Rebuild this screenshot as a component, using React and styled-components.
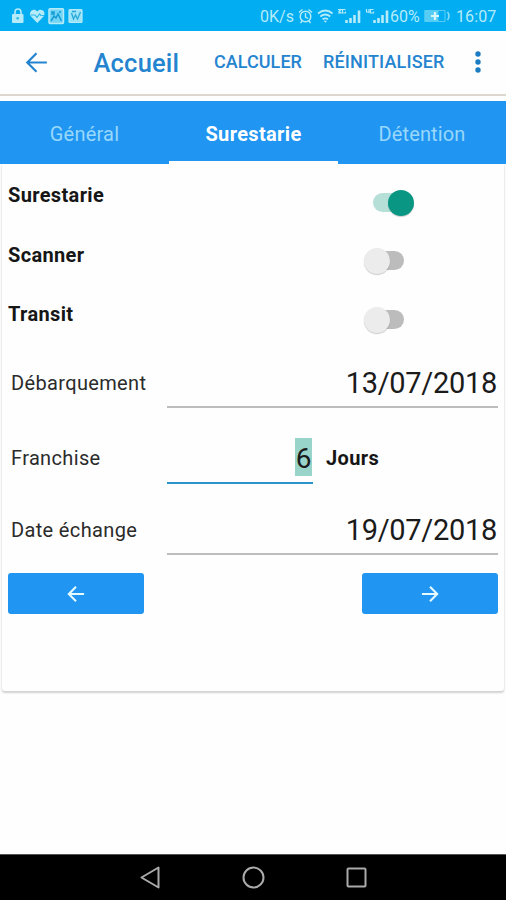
import React from "react";
import styled, { createGlobalStyle } from "styled-components";

const Global = createGlobalStyle`
  * { box-sizing: border-box; }
  body { margin: 0; background: #fefefe; font-family: Roboto, "Liberation Sans", sans-serif; }
  svg { display: block; flex: none; }
`;

const Screen = styled.div`
  width: 506px;
  height: 900px;
  display: flex;
  flex-direction: column;
  overflow: hidden;
  background: #fefefe;
`;

const StatusBar = styled.div`
  height: 31px;
  flex: none;
  display: flex;
  justify-content: space-between;
  background: #03adf1;
`;

const StatusIcons = styled.svg`
  fill: none;
  stroke: #b5ebf9;
`;

const StatusRight = styled.div`
  display: flex;
  align-items: center;
  padding: 2px 10px 0 0;
  color: #b5ebf9;
`;

const StatusText = styled.span`
  width: ${(p) => p.$w}px;
  font-size: ${(p) => p.$size}px;
  letter-spacing: ${(p) => p.$ls || 0}px;
  line-height: 29px;
  white-space: nowrap;
`;

const AppBar = styled.header`
  height: 65px;
  flex: none;
  display: flex;
  align-items: center;
  padding: 0 22px 1px 25px;
  color: #2484cf;
  border-bottom: 2px solid #dcd8d0;
  background: #fefefe;
`;

const Title = styled.h1`
  width: 120.5px;
  margin: 2px 0 0 45.5px;
  font-size: 25.5px;
  font-weight: 500;
  letter-spacing: 0.2px;
  line-height: 32px;
`;

const Action = styled.button`
  width: ${(p) => p.$w}px;
  padding: 0;
  border: 0;
  background: none;
  color: inherit;
  text-align: left;
  font: 500 18px/24px Roboto, "Liberation Sans", sans-serif;
  letter-spacing: ${(p) => p.$ls}px;
`;

const Tabs = styled.nav`
  height: 63px;
  flex: none;
  margin-top: 5px;
  display: grid;
  grid-template-columns: 169px 169px 168px;
  background: #2095f2;
`;

const Tab = styled.button`
  padding: 5px 0 0;
  border: 0;
  border-bottom: 3px solid ${(p) => (p.$active ? "#fefefe" : "transparent")};
  background: none;
  color: ${(p) => (p.$active ? "#fff" : "#98d8fb")};
  font-family: inherit;
  font-size: 20px;
  font-weight: ${(p) => (p.$active ? 700 : 400)};
  letter-spacing: ${(p) => p.$ls}px;
`;

const Card = styled.main`
  height: 527px;
  flex: none;
  margin: 0 2px;
  padding: 0 6px;
  border-radius: 0 0 3px 3px;
  background: #fefefe;
  box-shadow: 0 2px 2px #d2d2d2, 0 0 3px #e8e8e8;
  clip-path: inset(0 -4px -6px -4px);
`;

const SwitchRow = styled.div`
  height: ${(p) => p.$h}px;
  display: flex;
  justify-content: space-between;
  align-items: center;
  padding-right: 90px;
`;

const Strong = styled.span`
  font-size: 20px;
  font-weight: 700;
  line-height: 24px;
  letter-spacing: 0.35px;
  color: #161616;
`;

const Toggle = styled.span`
  width: 45px;
  height: 28px;
  display: flex;
  align-items: center;
  margin-top: ${(p) => p.$drop}px;
  padding-left: ${(p) => (p.$on ? 10 : 1)}px;
`;

const Track = styled.span`
  width: ${(p) => (p.$on ? 34 : 36)}px;
  height: 19px;
  display: flex;
  align-items: center;
  justify-content: ${(p) => (p.$on ? "flex-end" : "flex-start")};
  margin-left: ${(p) => (p.$on ? 0 : 4)}px;
  border-radius: 10px;
  background: ${(p) => (p.$on ? "#b5dfd7" : "#bcbcbc")};
`;

const Thumb = styled.span`
  width: 26px;
  height: 26px;
  flex: none;
  margin: 0 ${(p) => (p.$on ? -7 : 0)}px 0 ${(p) => (p.$on ? 0 : -4)}px;
  border-radius: 50%;
  background: ${(p) => (p.$on ? "#099683" : "#ececec")};
  box-shadow: 0 1px 1px #0003;
`;

const FieldRow = styled.div`
  height: ${(p) => p.$h}px;
  display: flex;
  align-items: flex-end;
`;

const Label = styled.label`
  width: 159px;
  padding: 0 0 ${(p) => p.$up}px 3px;
  color: #2b2b2b;
  font-size: 20px;
  line-height: 24px;
  letter-spacing: 0.35px;
`;

const Field = styled.div`
  width: ${(p) => p.$w}px;
  height: 50px;
  display: flex;
  justify-content: flex-end;
  align-items: center;
  padding: ${(p) => (p.$focus ? 0 : 1)}px 1px 0 0;
  border-bottom: 2px solid ${(p) => (p.$focus ? "#2c93cf" : "#bdbdbd")};
  color: #1b1b1b;
  font-size: 29px;
  letter-spacing: -0.3px;
`;

const Selection = styled.span`
  width: 17px;
  height: 38px;
  margin-bottom: 2px;
  background: #98d4ca;
  font-size: 28px;
  line-height: 41px;
  text-align: center;
  letter-spacing: 0;
`;

const Unit = styled(Strong)`
  padding: 0 0 14px 13px;
`;

const Buttons = styled.div`
  display: flex;
  justify-content: space-between;
  padding-top: 18px;
`;

const NavButton = styled.button`
  width: 136px;
  height: 41px;
  display: flex;
  align-items: center;
  justify-content: center;
  padding: 0;
  border: 0;
  border-radius: 3px;
  background: #2095f2;
  color: #e6fbff;
`;

const SystemNav = styled.footer`
  height: 46px;
  flex: none;
  margin-top: auto;
  display: flex;
  justify-content: center;
  border-top: 1px solid #555;
  background: #000;
`;

function Switch({ on, drop }) {
  return (
    <Toggle $on={on} $drop={drop}>
      <Track $on={on}><Thumb $on={on} /></Track>
    </Toggle>
  );
}

function Arrow({ size, right, width }) {
  return (
    <svg width={size} height={size} viewBox="0 0 20 20" fill="none" stroke="currentColor" strokeWidth={width}>
      <path d={right ? "M1 10H18M10 2L18 10L10 18" : "M19 10H2M10 2L2 10L10 18"} />
    </svg>
  );
}

function Notifications() {
  return (
    <StatusIcons width="90" height="31" viewBox="0 0 90 31">
      <path d="M15 15v-3a3 3 0 0 1 6 0v3" strokeWidth="1.6" />
      <rect x="12" y="14" width="11.5" height="9" rx="1" fill="#b5ebf9" stroke="none" />
      <circle cx="17.7" cy="18.3" r="1.4" fill="#35bdec" stroke="none" />
      <path d="M37.3 23l-6-6.2c-4-5 2.800-9.800 6-5.200 3.200-4.600 10 .2 6 5.200z" fill="#b5ebf9" stroke="none" />
      <path d="M31 15h4l2 2.500 2.500-3.500 1.500 1.500h3" stroke="#2bb9ee" strokeWidth="1.200" />
      <rect x="49" y="8.800" width="14.500" height="14.800" rx="1" fill="#72d5f6" strokeWidth="1.500" />
      <path d="M51 21l3-5 2 2 2-4 3.500 7M52 12h2v2h-2zM59 12h2" stroke="#159bd3" strokeWidth="1.500" />
      <rect x="69" y="9.500" width="13" height="13" rx="1" fill="#9be3f8" strokeWidth="1.200" />
      <path d="M71.500 13l2 6 2-4 2 4 3-7M72 11.500h4" stroke="#2aa9d8" strokeWidth="1.300" />
    </StatusIcons>
  );
}

function Connectivity() {
  return (
    <StatusIcons width="92" height="29" viewBox="298 2 92 29">
      <circle cx="305.500" cy="16.500" r="5.300" strokeWidth="1.500" />
      <path d="M305.500 13v4l2.500 1.500M299 12.500l3.500-3M312 12.500l-3.500-3M302 21l-1.500 2M309 21l1.500 2" strokeWidth="1.400" />
      <path d="M318 13.500q7.300-6 14.600 0M320.300 16.500q5-4 10 0M322.600 19.300q2.700-2 5.400 0" strokeWidth="1.700" />
      <path d="M323.500 20.800h3.600l-1.800 2z" fill="#b5ebf9" stroke="none" />
      <path d="M338 9.500h3l-2 2 2 1.500h-3M345.500 9.500h-3v3.500h3v-1.500" strokeWidth="1.200" />
      <path d="M346.500 20v3M350.500 18v5M354.500 15v8M359 10.500v12.500" strokeWidth="2.600" />
      <path d="M366.500 9v3h3M369 9v4M373.500 9.500h-3v3.500h3v-1.500" strokeWidth="1.200" />
      <path d="M374.500 20v3M378.500 18v5M382.500 15v8M387 10.500v12.500" strokeWidth="2.600" />
    </StatusIcons>
  );
}

function Battery() {
  return (
    <StatusIcons width="33" height="29" viewBox="423 2 33 29">
      <rect x="424.500" y="10" width="14" height="12" fill="#57cdf5" stroke="none" />
      <path d="M425 10.500h20v11h-20z" stroke="#57cdf5" strokeWidth="1" />
      <path d="M447.500 12q3 4 0 8" stroke="#8addf7" strokeWidth="1.500" />
      <path d="M435 12v8M431 16h8" stroke="#d5f7fd" strokeWidth="2.200" />
    </StatusIcons>
  );
}

export default function App() {
  return (
    <>
      <Global />
      <Screen>
        <StatusBar>
          <Notifications />
          <StatusRight>
            <StatusText $w={38} $size={16}>0K/s</StatusText>
            <Connectivity />
            <StatusText $w={33} $size={16}>60%</StatusText>
            <Battery />
            <StatusText $w={40} $size={16} $ls={0.1}>16:07</StatusText>
          </StatusRight>
        </StatusBar>
        <AppBar>
          <Arrow size={23} width={1.9} />
          <Title>Accueil</Title>
          <Action $w={109} $ls={0.05}>CALCULER</Action>
          <Action $w={151} $ls={0.15}>RÉINITIALISER</Action>
          <svg width="8" height="24" viewBox="0 0 8 24" fill="#1b7cc4">
            <circle cx="4" cy="4" r="2.700" />
            <circle cx="4" cy="12" r="2.700" />
            <circle cx="4" cy="20" r="2.700" />
          </svg>
        </AppBar>
        <Tabs>
          <Tab $ls={0.2}>Général</Tab>
          <Tab $active $ls={0.35}>Surestarie</Tab>
          <Tab $ls={0.15}>Détention</Tab>
        </Tabs>
        <Card>
          <SwitchRow $h={61}><Strong>Surestarie</Strong><Switch on drop={16} /></SwitchRow>
          <SwitchRow $h={60}><Strong>Scanner</Strong><Switch drop={11} /></SwitchRow>
          <SwitchRow $h={58}><Strong>Transit</Strong><Switch drop={11} /></SwitchRow>
          <FieldRow $h={65}>
            <Label $up={13}>Débarquement</Label>
            <Field $w={331}>13/07/2018</Field>
          </FieldRow>
          <FieldRow $h={76}>
            <Label $up={14}>Franchise</Label>
            <Field $w={146} $focus><Selection>6</Selection></Field>
            <Unit>Jours</Unit>
          </FieldRow>
          <FieldRow $h={71}>
            <Label $up={13}>Date échange</Label>
            <Field $w={331}>19/07/2018</Field>
          </FieldRow>
          <Buttons>
            <NavButton aria-label="Précédent"><Arrow size={18} width={2.3} /></NavButton>
            <NavButton aria-label="Suivant"><Arrow size={18} right width={2.3} /></NavButton>
          </Buttons>
        </Card>
        <SystemNav>
          <svg width="506" height="45" viewBox="0 855 506 45" fill="none" stroke="#aaa" strokeWidth="2">
            <path d="M158.500 867.500v20l-17-10z" strokeLinejoin="round" />
            <circle cx="253.500" cy="877.500" r="10" />
            <rect x="347.500" y="868.500" width="18" height="18" rx="1" />
          </svg>
        </SystemNav>
      </Screen>
    </>
  );
}
